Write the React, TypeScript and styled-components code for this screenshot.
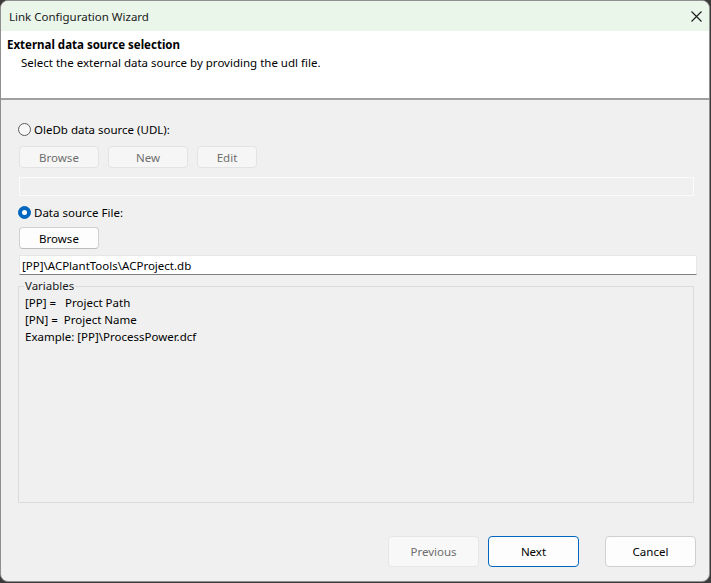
import * as React from 'react'
import styled, { createGlobalStyle } from 'styled-components'

const GlobalStyle = createGlobalStyle`
    html, body {
        margin: 0;
        padding: 0;
        background: #3b3b3b;
    }
    body {
        font-family: "Segoe UI", "Noto Sans", "Open Sans", sans-serif;
        font-size: 11.5px;
        color: #000;
    }
`

const App = () => (
    <>
        <GlobalStyle />
        <Window>
            <TitleBar>
                <Title>Link Configuration Wizard</Title>
                <Close aria-label="Close">
                    <svg width="11" height="11" viewBox="0 0 11 11">
                        <path d="M0.5 0.5 L10.5 10.5 M10.5 0.5 L0.5 10.5" stroke="#1a1a1a" strokeWidth="1.1" />
                    </svg>
                </Close>
            </TitleBar>
            <Header>
                <HeaderTitle>External data source selection</HeaderTitle>
                <HeaderText>Select the external data source by providing the udl file.</HeaderText>
            </Header>
            <Body>
                <RadioRow>
                    <Radio />
                    <span>OleDb data source (UDL):</span>
                </RadioRow>
                <ButtonRow $top={9}>
                    <Button disabled $width={80}>Browse</Button>
                    <Button disabled $width={80}>New</Button>
                    <Button disabled $width={60}>Edit</Button>
                </ButtonRow>
                <DisabledField />
                <RadioRow $top={8}>
                    <Radio $checked />
                    <span>Data source File:</span>
                </RadioRow>
                <ButtonRow $top={7}>
                    <Button $width={80}>Browse</Button>
                </ButtonRow>
                <Field>[PP]\ACPlantTools\ACProject.db</Field>
                <Group>
                    <Legend>Variables</Legend>
                    <VarLine>[PP] =&nbsp;&nbsp; Project Path</VarLine>
                    <VarLine>[PN] =&nbsp; Project Name</VarLine>
                    <VarLine>Example: [PP]\ProcessPower.dcf</VarLine>
                </Group>
            </Body>
            <Footer>
                <FooterButton disabled>Previous</FooterButton>
                <FooterButton $primary>Next</FooterButton>
                <FooterButton $gap={17}>Cancel</FooterButton>
            </Footer>
        </Window>
    </>
)

const Window = styled.div`
    box-sizing: border-box;
    width: 710px;
    height: 582px;
    display: flex;
    flex-direction: column;
    background: #f0f0f0;
    border: 1px solid #8f8f8f;
    border-radius: 8px;
    overflow: hidden;
`

const TitleBar = styled.div`
    height: 30px;
    flex-shrink: 0;
    display: flex;
    align-items: center;
    justify-content: space-between;
    padding: 0 7px 0 8px;
    background: #eaf6ea;
`

const Title = styled.span`
    color: #1a1a1a;
`

const Close = styled.span`
    display: flex;
    align-items: center;
`

const Header = styled.div`
    height: 69px;
    flex-shrink: 0;
    box-sizing: border-box;
    padding: 6px 6px 0;
    background: #fff;
    border-bottom: 2px solid #a0a0a0;
`

const HeaderTitle = styled.div`
    font-weight: bold;
    line-height: 16px;
`

const HeaderText = styled.div`
    margin: 2px 0 0 14px;
    line-height: 16px;
`

const Body = styled.div`
    flex: 1;
    display: flex;
    flex-direction: column;
    padding: 21px 15px 0 17px;
`

const RadioRow = styled.label<{ $top?: number }>`
    display: flex;
    align-items: center;
    gap: 3px;
    height: 16px;
    margin-top: ${p => p.$top ?? 0}px;
`

const Radio = styled.span<{ $checked?: boolean }>`
    box-sizing: border-box;
    width: 13px;
    height: 13px;
    border-radius: 50%;
    border: 1px solid ${p => (p.$checked ? '#0067c0' : '#5c5c5c')};
    background: ${p => (p.$checked ? '#0067c0' : '#f7f7f7')};
    display: flex;
    align-items: center;
    justify-content: center;
    &::after {
        content: '';
        display: ${p => (p.$checked ? 'block' : 'none')};
        width: 5px;
        height: 5px;
        border-radius: 50%;
        background: #fff;
    }
`

const ButtonRow = styled.div<{ $top?: number }>`
    display: flex;
    gap: 9px;
    margin-top: ${p => p.$top ?? 10}px;
    margin-left: 1px;
`

const Button = styled.button<{ $width: number }>`
    box-sizing: border-box;
    width: ${p => p.$width}px;
    height: 22px;
    font-family: inherit;
    font-size: 11.5px;
    color: #000;
    background: #fdfdfd;
    border: 1px solid #d0d0d0;
    border-bottom-color: #bcbcbc;
    border-radius: 4px;
    padding: 0;
    &:disabled {
        color: #6e6e6e;
        background: #f6f6f6;
        border-color: #e3e3e3;
    }
`

const DisabledField = styled.div`
    box-sizing: border-box;
    height: 19px;
    margin: 9px 0 0 1px;
    border: 1px solid #fbfbfb;
`

const Field = styled.div`
    box-sizing: border-box;
    height: 20px;
    margin: 6px -3px 0 1px;
    padding: 2px 2px 0;
    background: #fff;
    border: 1px solid #e6e6e6;
    border-bottom: 1px solid #7f7f7f;
    line-height: 15px;
`

const Group = styled.fieldset`
    margin: 5px 0 0 0;
    height: 223px;
    box-sizing: border-box;
    border: 1px solid #dcdcdc;
    padding: 0 6px;
    display: flex;
    flex-direction: column;
`

const Legend = styled.legend`
    padding: 0 1px;
    margin-left: -1px;
    line-height: 12px;
    color: #1a1a1a;
`

const VarLine = styled.div`
    line-height: 17px;
    &:first-of-type {
        margin-top: 2px;
    }
`

const Footer = styled.div`
    height: 45px;
    flex-shrink: 0;
    display: flex;
    justify-content: flex-end;
    align-items: flex-start;
    padding: 0 13px 0 0;
    gap: 9px;
`

const FooterButton = styled.button<{ $primary?: boolean; $gap?: number }>`
    box-sizing: border-box;
    width: 91px;
    height: 31px;
    margin-left: ${p => p.$gap ?? 0}px;
    font-family: inherit;
    font-size: 11.5px;
    color: #000;
    background: #fdfdfd;
    border: ${p => (p.$primary ? '1.5px solid #0067c0' : '1px solid #d0d0d0')};
    border-radius: 4px;
    &:disabled {
        color: #6e6e6e;
        background: #f8f8f8;
        border-color: #e6e6e6;
    }
`

export default App
